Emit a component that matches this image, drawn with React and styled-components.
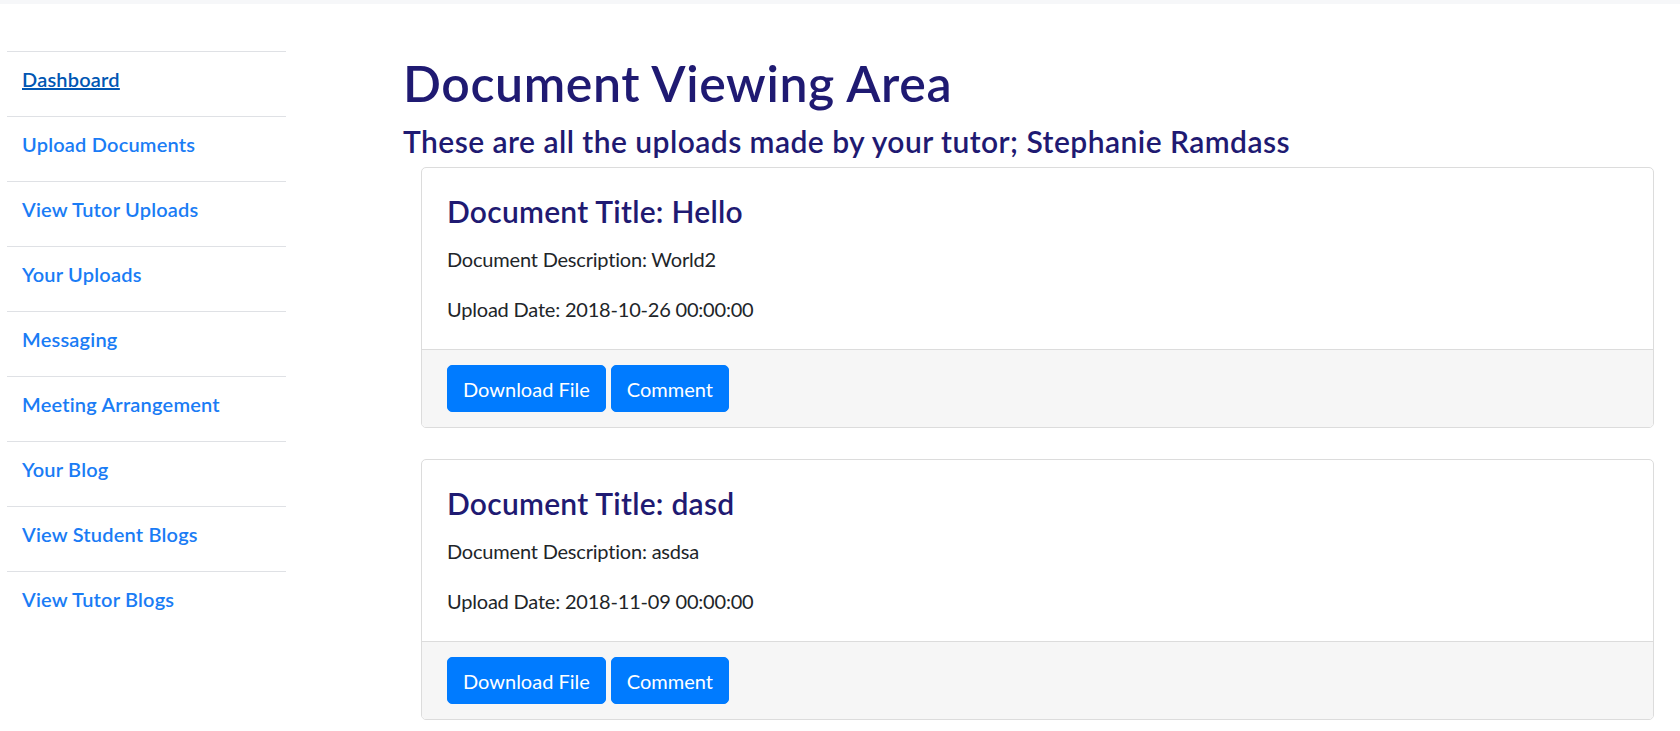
import React from "react";
import styled, { createGlobalStyle } from "styled-components";

const GlobalStyle = createGlobalStyle`
  body {
    margin: 0;
    background: #fff;
    font-family: Lato, "Liberation Sans", sans-serif;
    color: #212529;
  }
`;

const TopStrip = styled.div`
  height: 4px;
  background: #f6f7f9;
`;

const Layout = styled.div`
  display: flex;
  align-items: flex-start;
`;

const Sidebar = styled.nav`
  width: 279px;
  margin-left: 7px;
  padding-top: 47px;
  flex-shrink: 0;
`;

const NavItem = styled.div`
  border-top: 1px solid #dfe1e5;
  padding: 12px 15px 22px;
`;

const NavLink = styled.a`
  display: block;
  font-size: 20px;
  line-height: 30px;
  font-weight: 600;
  letter-spacing: 0.2px;
  color: ${props => (props.active ? "#0056b3" : "#1a7cf5")};
  text-decoration: ${props => (props.active ? "underline" : "none")};
  cursor: pointer;
`;

const Main = styled.main`
  flex: 1;
  margin-left: 117px;
  margin-right: 26px;
  padding-top: 49px;
`;

const Heading = styled.h1`
  margin: 0 0 10px;
  font-size: 50px;
  line-height: 60px;
  font-weight: 600;
  letter-spacing: 0.6px;
  color: #1f1a72;
`;

const SubHeading = styled.h4`
  margin: 0 0 8px;
  font-size: 30px;
  line-height: 36px;
  font-weight: 600;
  letter-spacing: 0.45px;
  color: #1f1a72;
`;

const Card = styled.div`
  margin: 0 0 31px 18px;
  border: 1px solid #dcdcdc;
  border-radius: 5px;
  background: #fff;
  overflow: hidden;
`;

const CardBody = styled.div`
  padding: 25px;
`;

const CardTitle = styled.h4`
  margin: 0 0 15px;
  font-size: 30px;
  line-height: 36px;
  font-weight: 600;
  letter-spacing: 0.25px;
  color: #1f1a72;
`;

const CardText = styled.p`
  margin: 0 0 20px;
  font-size: 20px;
  line-height: 30px;
  letter-spacing: -0.2px;
  &:last-child {
    margin-bottom: 0;
  }
`;

const CardFooter = styled.div`
  display: flex;
  gap: 5px;
  padding: 15px 25px;
  border-top: 1px solid #dcdcdc;
  background: #f6f6f6;
`;

const Button = styled.button`
  font-family: inherit;
  font-size: 20px;
  line-height: 30px;
  padding: 7.5px 15px;
  border: 1px solid #007bff;
  border-radius: 5px;
  background: #007bff;
  color: #fff;
  cursor: pointer;
`;

const links = [
  "Dashboard",
  "Upload Documents",
  "View Tutor Uploads",
  "Your Uploads",
  "Messaging",
  "Meeting Arrangement",
  "Your Blog",
  "View Student Blogs",
  "View Tutor Blogs"
];

const documents = [
  { title: "Hello", description: "World2", date: "2018-10-26 00:00:00" },
  { title: "dasd", description: "asdsa", date: "2018-11-09 00:00:00" }
];

export default function App() {
  return (
    <>
      <GlobalStyle />
      <TopStrip />
      <Layout>
        <Sidebar>
          {links.map((label, i) => (
            <NavItem key={label}>
              <NavLink active={i === 0}>{label}</NavLink>
            </NavItem>
          ))}
        </Sidebar>
        <Main>
          <Heading>Document Viewing Area</Heading>
          <SubHeading>
            These are all the uploads made by your tutor; Stephanie Ramdass
          </SubHeading>
          {documents.map(doc => (
            <Card key={doc.title}>
              <CardBody>
                <CardTitle>Document Title: {doc.title}</CardTitle>
                <CardText>Document Description: {doc.description}</CardText>
                <CardText>Upload Date: {doc.date}</CardText>
              </CardBody>
              <CardFooter>
                <Button>Download File</Button>
                <Button>Comment</Button>
              </CardFooter>
            </Card>
          ))}
        </Main>
      </Layout>
    </>
  );
}
